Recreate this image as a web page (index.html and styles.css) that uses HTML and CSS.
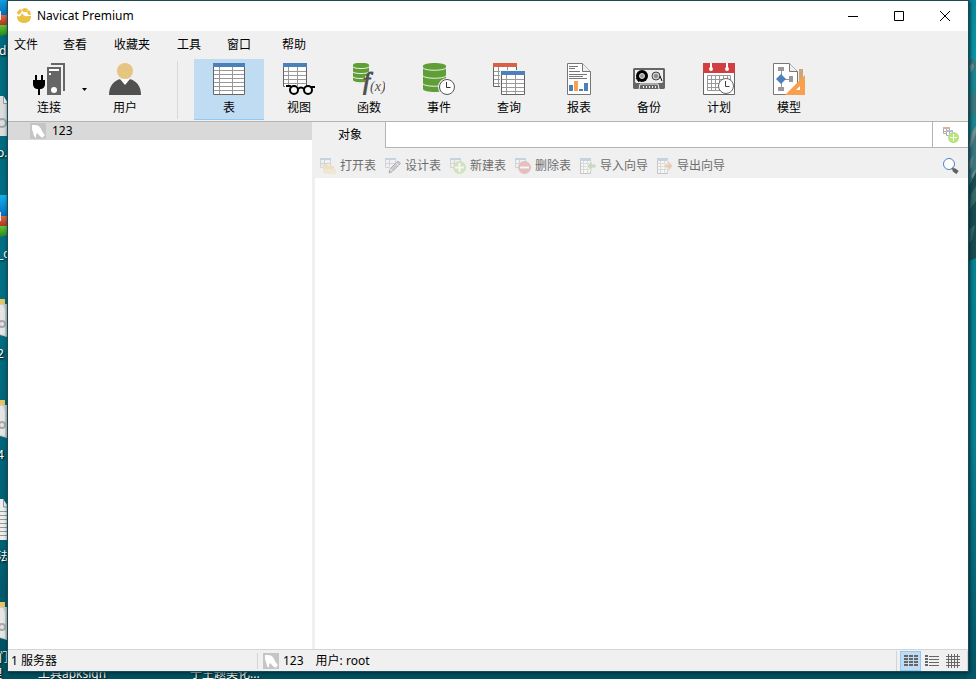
FILE: index.html
```html
<!DOCTYPE html>
<html lang="zh-CN">
<head>
<meta charset="utf-8">
<title>Navicat Premium</title>
<link rel="stylesheet" href="styles.css">
</head>
<body>
<svg class="defs" aria-hidden="true">
  <symbol id="table24" viewBox="0 0 24 24">
    <path fill="#fff" d="M0 0h24v24H0z"/>
    <path fill="none" stroke="#999" d="M5.500 4v19M14.500 4v19M1 8.500h22M1 12.500h22M1 16.500h22M1 20.500h22"/>
    <path fill="none" stroke="#666" d="M.5 3v20.500h23V3"/>
  </symbol>
  <symbol id="mini-table" viewBox="0 0 16 16">
    <path fill="#eef2f8" d="M0 0h11v10H0z"/>
    <path fill="#8fa3c4" d="M0 0h11v2H0z"/>
    <path fill="none" stroke="#a2a8b2" d="M.5 2v7.500h5M10.500 2v6M4.500 2v6M1 5.500h9"/>
  </symbol>
  <symbol id="wizard-table" viewBox="0 0 16 16">
    <path fill="#fff" d="M0 0h11v16H0z"/>
    <path fill="#8fa3c4" d="M0 0h11v3H0z"/>
    <path fill="none" stroke="#bbb" d="M3.500 3v12M7.500 3v12M1 5.500h9M1 8.500h9M1 11.500h9"/>
    <path fill="none" stroke="#888" d="M.5 3v12.500h10V3"/>
  </symbol>
  <symbol id="dolphin" viewBox="0 0 16 16">
    <path fill="#c5c5c5" d="M0 0h16v16H0z"/>
    <path fill="#fff" d="M2 2h3c4 0 6 3 7 6l2 3 1 2-2 0 1 2-3-1-3-3-1-1-1 2v3l-2-2-1-4-1-3z"/>
  </symbol>
</svg>

<div class="desktop" aria-hidden="true">
  <svg class="desk-left" width="8" height="679" viewBox="0 0 8 679">
    <defs>
      <linearGradient id="blue" x2="0" y2="1"><stop offset="0" stop-color="#16b2ee"/><stop offset="1" stop-color="#066bb8"/></linearGradient>
      <linearGradient id="red" x2="0" y2="1"><stop offset="0" stop-color="#e4683f"/><stop offset="1" stop-color="#a93a20"/></linearGradient>
      <linearGradient id="green" x2="0" y2="1"><stop offset="0" stop-color="#65c634"/><stop offset="1" stop-color="#28851c"/></linearGradient>
      <g id="app"><path fill="url(#blue)" d="M0 0h8v22H0z"/><path fill="url(#red)" d="M0 21h8v10H0z"/><path fill="url(#green)" d="M0 31h8v9l-8 2z"/><path fill="#e6e6e6" d="M0 17h1v9H0z"/></g>
      <g id="folder"><path fill="#e8c464" d="M0 0h5v5H0z"/><path fill="#ccc" d="M0 5h7v33l-7-2z"/><path fill="#e6e6e6" d="M0 6h3l2 5v25l-5-1z"/><circle cx="2" cy="25" r="3" fill="none" stroke="#aaa" stroke-width="2"/></g>
    </defs>
    <use href="#app" y="-6"/><use href="#app" y="195"/>
    <path fill="#dcdcdc" d="M0 96h3l5 7v33H0z"/><path fill="#f5f5f5" stroke="#999" d="M3.500 96v7.500H8"/><circle cx="2" cy="123" r="4" fill="none" stroke="#9aa6ad" stroke-width="2"/>
    <use href="#folder" y="299"/><use href="#folder" y="400"/><use href="#folder" y="602"/>
    <path fill="#eee" d="M0 499h3l5 7v34H0z"/><path fill="none" stroke="#999" d="M3.500 499v8H8M0 511.500h8M0 515.500h8M0 519.500h8M0 523.500h8M0 527.500h8M0 531.500h8M0 535.500h8"/>
  </svg>
  <svg class="desk-right" width="9" height="679" viewBox="0 0 9 679">
    <defs><linearGradient id="sea" x2="0" y2="1"><stop offset="0" stop-color="#078ba0"/><stop offset=".08" stop-color="#0a96a6"/><stop offset=".4" stop-color="#068494"/><stop offset=".65" stop-color="#078294"/><stop offset="1" stop-color="#045668"/></linearGradient></defs>
    <path fill="url(#sea)" d="M0 0h9v679H0z"/>
    <path fill="#3c7780" d="M0 61l5-3 4 4v126l-9 4z"/>
    <path fill="#1b8792" d="M0 73l9-5v22l-5 8-4-4zM0 118l6-6 3 7v13l-9 8z"/>
    <path fill="#719092" d="M2 66l4-3 1 4-3 6zM5 132l4-6v7l-5 14-3 3zM0 164l6-8-1 11-5 4zM4 176l5-7-2 12z"/>
    <path fill="#1a4c50" d="M0 190l9-18v86l-9 4z"/>
    <path fill="#356a67" d="M4 194l5-8v15l-7 9zM0 231l8-6-3 15-5 5z"/>
  </svg>
  <span class="caption c1">d</span><span class="caption c2">o.</span><span class="caption c3">_c</span><span class="caption c4">2</span><span class="caption c5">4</span><span class="caption c6">法</span><span class="caption c7">们</span><span class="caption c8">理</span>
  <span class="caption c9">工具apksign</span><span class="caption c10">于主题美化...</span>
</div>

<main class="window">
  <header class="titlebar">
    <svg width="16" height="16" viewBox="0 0 16 16" aria-hidden="true"><path fill="#eac143" d="M1 4l3-3 2 1-1 3-3 2zM6 1l3-1 3 1-1 3-4 0zM12 2l2 1 1 4-2 0-2-2zM1 8c3 1 4 0 5-3 1 2 3 4 6 3h3c0 5-3 7-7 7s-7-2-7-7z"/></svg>
    <h1>Navicat Premium</h1>
    <button aria-label="最小化"><svg width="12" height="12" viewBox="0 0 12 12"><path d="M1 6.500h10"/></svg></button>
    <button aria-label="最大化"><svg width="12" height="12" viewBox="0 0 12 12"><path d="M1.500 1.500h9v9h-9z"/></svg></button>
    <button aria-label="关闭"><svg width="12" height="12" viewBox="0 0 12 12"><path d="M1 1l10 10M11 1L1 11"/></svg></button>
  </header>

  <nav class="menu">
    <button>文件</button><button>查看</button><button>收藏夹</button><button>工具</button><button>窗口</button><button>帮助</button>
  </nav>

  <div class="toolbar">
    <button class="tool connect"><svg viewBox="0 0 32 32">
      <path d="M2 12h2v5h4v-5h2v5h2v4c0 3-2 5-5 5v6H5v-6c-3 0-5-2-5-5v-4h2z"/>
      <path fill="#666" d="M14 4h14v28H14zM18 0h14v28h-2V2H18z"/>
      <path fill="#fff" d="M16 6h10v2H16zM16 10h2v2h-2z"/><circle cx="21" cy="27" r="3" fill="#fff"/></svg>连接</button>
    <button class="drop" aria-label="连接选项"><svg width="5" height="3" viewBox="0 0 5 3"><path d="M0 0h5L2.500 3z"/></svg></button>
    <button class="tool"><svg viewBox="0 0 32 32">
      <path fill="#505050" d="M0 32c0-9 5-15 12-16h8c7 1 12 7 12 16z"/><path fill="#fff" d="M11 16l5 6 5-6z"/><circle cx="16" cy="8" r="8" fill="#e6c482"/></svg>用户</button>
    <span class="rule"></span>
    <button class="tool active"><svg viewBox="0 0 32 32">
      <path fill="#fff" d="M0 0h32v32H0z"/><path fill="none" stroke="#999" d="M6.500 4v27M19.500 4v27M1 7.500h30M1 11.500h30M1 15.500h30M1 19.500h30M1 23.500h30M1 27.500h30"/>
      <path fill="none" stroke="#666" d="M.5 4v27.500h31V4"/><path fill="#4c80ba" d="M0 0h32v4H0z"/></svg>表</button>
    <button class="tool"><svg viewBox="0 0 32 32">
      <use href="#table24" width="24" height="24"/><path fill="#4c80ba" d="M0 0h24v4H0z"/>
      <path fill="#f0f0f0" d="M2 23h30v9H2z"/><path fill="none" stroke="#000" stroke-width="2" d="M3 23h4l2 2M27 24h5M15 26q3-3 6 0"/>
      <circle cx="11" cy="27" r="4" fill="#f7f7f7" stroke="#000" stroke-width="2"/><circle cx="25" cy="27" r="4" fill="#f7f7f7" stroke="#000" stroke-width="2"/></svg>视图</button>
    <button class="tool"><svg viewBox="0 0 32 32">
      <path fill="#5f9f36" d="M0 2c0-3 16-3 16 0v15c0 3-16 3-16 0z"/><path fill="none" stroke="#f0f0f0" d="M0 4c2 2 14 2 16 0M0 9c2 2 14 2 16 0M0 14c2 2 14 2 16 0"/>
      <path fill="#f0f0f0" d="M12 13h7v7h-7z"/><text class="fn-f" x="10" y="27">f</text><text class="fn-x" x="17" y="28">(x)</text></svg>函数</button>
    <button class="tool"><svg viewBox="0 0 32 32">
      <path fill="#5f9f36" d="M0 3c0-4 23-4 23 0v23c0 4-23 4-23 0z"/><path fill="none" stroke="#f0f0f0" d="M0 5c3 3 20 3 23 0M0 13c3 3 20 3 23 0M0 21c3 3 20 3 23 0"/>
      <circle cx="24" cy="24" r="9" fill="#f0f0f0"/><circle cx="24" cy="24" r="7.500" fill="#fff" stroke="#555"/><path fill="none" stroke="#333" d="M23.500 19v5.500h4"/></svg>事件</button>
    <button class="tool"><svg viewBox="0 0 32 32">
      <use href="#table24" width="24" height="24"/><path fill="#d96245" d="M0 0h24v4H0z"/><path fill="#f0f0f0" d="M7 7h25v25H7z"/>
      <use href="#table24" x="8" y="8" width="24" height="24"/><path fill="#4c80ba" d="M8 8h24v4H8z"/></svg>查询</button>
    <button class="tool"><svg viewBox="0 0 32 32">
      <path fill="#fff" stroke="#777" d="M4.500.500h15l8 8v23h-23z"/><path fill="#eee" stroke="#777" d="M19.500.500v8h8"/>
      <path stroke="#777" d="M6 3.500h9M6 5.500h6M6 8.500h11M6 11.500h18M6 13.500h14M6 15.500h18"/>
      <path fill="#4c80ba" d="M6 22h4v6H6zM16 26h4v2h-4zM21 20h4v8h-4z"/><path fill="#f8a04d" d="M11 18h4v10h-4z"/></svg>报表</button>
    <button class="tool"><svg viewBox="0 0 32 32">
      <path fill="#666" d="M1 5h30l1 1v19l-1 1H1l-1-1V6z"/><path fill="#eee" d="M2 7h28v12l-1 1H3l-1-1z"/>
      <circle cx="9" cy="13" r="6"/><circle cx="9" cy="13" r="2.500" fill="#999" stroke="#ddd"/>
      <circle cx="23" cy="13" r="4" fill="#ccc" stroke="#444"/><circle cx="23" cy="13" r="2" fill="#888"/><path fill="none" stroke="#000" d="M27 13l2 5M3 15l3 4"/>
      <path fill="#666" stroke="#eee" d="M6 26l1-5h18l1 5"/><path stroke="#eee" stroke-width="2" stroke-dasharray="1 2" d="M10 24h13"/></svg>备份</button>
    <button class="tool"><svg viewBox="0 0 32 32">
      <path fill="#fff" stroke="#666" d="M.5 4v27.500h31V4z"/><path fill="#d13f40" d="M0 0h32v10H0z"/>
      <path stroke="#fff" stroke-width="2" d="M8 0v6M24 0v6"/><circle cx="8" cy="6" r="2" fill="#fff"/><circle cx="24" cy="6" r="2" fill="#fff"/>
      <path fill="none" stroke="#999" d="M4.500 12.500h23v15h-23zM8.500 12v16M12.500 12v16M16.500 12v16M20.500 12v16M24.500 12v16M4 16.500h24M4 20.500h24M4 24.500h24"/>
      <circle cx="23" cy="23" r="7.500" fill="#fff" stroke="#666"/><path fill="none" stroke="#444" d="M22.500 18v5.500h4"/></svg>计划</button>
    <button class="tool"><svg viewBox="0 0 32 32">
      <path fill="#fff" stroke="#777" d="M.5.500h16l8 8v23H.5z"/><path fill="#eee" stroke="#777" d="M16.500.500v8h8"/>
      <path stroke="#999" d="M8.500 6v20M8 16.500h10"/><path fill="#999" d="M5 4h6v4H5zM5 24h6v4H5zM16 13h4v6h-4z"/><path fill="#4c80ba" d="M8 11l5 5-5 5-5-5z"/>
      <path fill="#cda576" d="M26 6h4v12h-4z"/><path fill="#f8a04d" d="M32 12v20H12z"/><path fill="#fff" d="M27 23v4h-4z"/></svg>模型</button>
  </div>

  <div class="work">
    <aside class="tree"><a class="node" href="#c123"><svg width="16" height="16"><use href="#dolphin"/></svg>123</a></aside>
    <section class="pane">
      <div class="tabs">
        <button class="tab">对象</button><div class="strip"></div>
        <button class="add" aria-label="新建查询"><svg width="16" height="16" viewBox="0 0 16 16">
          <path fill="#fff" stroke="#aaa" d="M.5 1v5.500h6V1M3.500 1v5M1 4.500h6"/><path fill="#edaa99" d="M0 0h7v2H0z"/>
          <path fill="#fff" stroke="#aaa" d="M3.500 4v4.500h6V4M6.500 4v4"/><path fill="#a4bfdf" d="M3 3h7v2H3z"/><circle cx="10.500" cy="10.500" r="5.500" fill="#b7e47c"/><path stroke="#fff" d="M10.500 7v7M7 10.500h7"/></svg></button>
      </div>
      <div class="actions">
        <button disabled><svg viewBox="0 0 16 16"><use href="#mini-table" width="16" height="16"/><path fill="#e5c68a" d="M2 6h5l1 2h6v8H4z"/><path fill="#f1dba9" d="M4 11h12v5H4z"/></svg>打开表</button>
        <button disabled><svg viewBox="0 0 16 16"><use href="#mini-table" width="16" height="16"/><path fill="#999" stroke="#555" d="M4 15l1-4 8-8 2.500 2.500-8 8z"/><path fill="none" stroke="#eee" d="M5 11l2.500 2.500M11 5l2.500 2.500"/></svg>设计表</button>
        <button disabled><svg viewBox="0 0 16 16"><use href="#mini-table" width="16" height="16"/><circle cx="9.500" cy="9.500" r="6.500" fill="#a5cf72"/><path stroke="#fff" stroke-width="2" d="M9.500 5v9M5 9.500h9"/></svg>新建表</button>
        <button disabled><svg viewBox="0 0 16 16"><use href="#mini-table" width="16" height="16"/><circle cx="9.500" cy="9.500" r="6.500" fill="#d57579"/><path stroke="#fff" stroke-width="2" d="M5 9.500h9"/></svg>删除表</button>
        <button disabled><svg viewBox="0 0 16 16"><use href="#wizard-table" width="16" height="16"/><path fill="#91b86b" stroke="#f0f0f0" d="M7 8l5-6v4h4v4h-4v4z"/></svg>导入向导</button>
        <button disabled><svg viewBox="0 0 16 16"><use href="#wizard-table" width="16" height="16"/><path fill="#dd9865" stroke="#f0f0f0" d="M16 8l-5-6v4H7v4h4v4z"/></svg>导出向导</button>
        <button class="search" aria-label="搜索"><svg viewBox="0 0 16 16"><circle cx="6" cy="6" r="5.500" fill="#fff" stroke="#4c80c0"/><path stroke="#666" stroke-width="2" d="M9 10l2 2"/><path stroke="#606060" stroke-width="4" d="M10.500 11.500l4 3"/></svg></button>
      </div>
      <div class="content"></div>
    </section>
  </div>

  <footer class="status">
    <span class="count">1 服务器</span>
    <span class="server"><svg width="16" height="16"><use href="#dolphin"/></svg>123</span>
    <span class="user">用户: root</span>
    <div class="views">
      <button class="on" aria-label="列表"><svg width="14" height="12" viewBox="0 0 14 12"><path fill="#666" d="M0 0h4v2H0zM5 0h4v2H5zM10 0h4v2h-4zM0 3h4v2H0zM5 3h4v2H5zM10 3h4v2h-4zM0 6h4v2H0zM5 6h4v2H5zM10 6h4v2h-4zM0 9h4v2H0zM5 9h4v2H5zM10 9h4v2h-4z"/></svg></button>
      <button aria-label="详细信息"><svg width="14" height="12" viewBox="0 0 14 12"><path fill="#666" d="M0 0h3v2H0zM0 3h3v2H0zM0 6h3v2H0zM0 9h3v2H0zM4 1h10v1H4zM4 4h10v1H4zM4 7h10v1H4zM4 10h10v1H4z"/></svg></button>
      <button aria-label="ER 图表"><svg width="14" height="14" viewBox="0 0 14 14"><path stroke="#666" d="M2.500 0v14M5.500 0v14M8.500 0v14M11.500 0v14M0 2.500h14M0 5.500h14M0 8.500h14M0 11.500h14"/></svg></button>
    </div>
  </footer>
</main>
</body>
</html>
```
FILE: styles.css
```css
* { box-sizing: border-box; }

body {
  margin: 0;
  height: 100vh;
  padding: 1px 8px 8px;
  overflow: hidden;
  background: linear-gradient(#00687c, #006f84 40%, #006073 80%, #00505f);
  color: #000;
  font: 12px/16px "Noto Sans", "Noto Sans CJK SC", sans-serif;
}

button {
  margin: 0;
  padding: 0;
  border: 0;
  background: none;
  color: inherit;
  font: inherit;
}

svg { display: block; flex: none; }
.defs { position: absolute; width: 0; height: 0; }

/* Desktop behind the window */
.desktop { position: absolute; inset: 0; overflow: hidden; }
.desk-left { position: absolute; left: 0; top: 0; }
.desk-right { position: absolute; right: 0; top: 0; }
.caption {
  position: absolute;
  color: #fff;
  white-space: nowrap;
  text-shadow: 1px 1px 2px #000;
}
.c1 { left: -1px; top: 43px; }
.c2 { left: -3px; top: 145px; }
.c3 { left: -2px; top: 246px; }
.c4 { left: -3px; top: 346px; }
.c5 { left: -3px; top: 447px; }
.c6 { left: -3px; top: 549px; }
.c7 { left: -4px; top: 650px; }
.c8 { left: -10px; top: 666px; }
.c9 { left: 38px; top: 666px; }
.c10 { left: 190px; top: 666px; }

/* Application window */
.window {
  position: relative;
  display: flex;
  flex-direction: column;
  height: 100%;
  background: #f0f0f0;
  box-shadow: 0 0 0 1px #1c4953, 1px 1px 4px 1px #002a35;
}

.titlebar {
  display: flex;
  align-items: center;
  height: 30px;
  padding-left: 8px;
  background: #fff;
}
.titlebar h1 {
  flex: 1;
  margin: 0 0 0 5px;
  font-size: 12px;
  font-weight: 400;
}
.titlebar button {
  display: grid;
  place-items: center;
  width: 46px;
  height: 30px;
}
.titlebar button path { fill: none; stroke: #000; }

.menu {
  display: grid;
  grid-template-columns: 49px 51px 63px 50px 55px auto;
  align-items: center;
  height: 27px;
  padding-left: 6px;
}
.menu button { justify-self: start; }

.toolbar {
  display: flex;
  align-items: center;
  height: 64px;
  padding: 0 0 0 11px;
  border-bottom: 1px solid #b4b4b4;
}
.tool {
  display: flex;
  flex-direction: column;
  align-items: center;
  gap: 5px;
  width: 70px;
  height: 61px;
  padding-top: 4px;
  border-bottom: 1px solid transparent;
}
.tool svg { width: 32px; height: 32px; }
.connect { width: 60px; }
.active { background: #c0dcf3; border-color: #90c8f6; }
.drop { display: grid; place-items: center; width: 11px; height: 61px; }
.rule { width: 1px; height: 58px; margin: 0 16px 0 17px; background: #d8d8d8; }
.fn-f { fill: #505050; stroke: #505050; font: italic 25px "Liberation Serif", serif; }
.fn-x { fill: #505050; font: italic 14px "Liberation Serif", serif; }

.work { display: flex; flex: 1; min-height: 0; }
.tree { width: 304px; background: #fff; }
.node {
  display: flex;
  align-items: center;
  gap: 6px;
  height: 18px;
  padding-left: 22px;
  background: #d9d9d9;
  color: #000;
  text-decoration: none;
}
.pane {
  display: flex;
  flex: 1;
  flex-direction: column;
  padding-left: 3px;
}
.tabs { display: flex; height: 26px; }
.tab { width: 70px; }
.strip {
  flex: 1;
  border: solid #b4b4b4;
  border-width: 0 1px 1px;
  background: #fff;
}
.add {
  display: grid;
  place-items: center;
  width: 35px;
  border-bottom: 1px solid #b4b4b4;
  background: #fff;
}
.actions {
  display: flex;
  align-items: center;
  gap: 9px;
  height: 30px;
  padding: 5px 9px 0 5px;
}
.actions button { display: flex; align-items: center; gap: 4px; }
.actions svg { width: 16px; height: 16px; }
.actions button:disabled { color: #6d6d6d; }
.actions button:disabled svg { opacity: .4; }
.actions .search { margin-left: auto; }
.content { flex: 1; background: #fff; }

.status {
  display: flex;
  align-items: center;
  height: 22px;
  border-top: 1px solid #d4d4d4;
}
.count { width: 250px; padding-left: 3px; border-right: 1px solid #d4d4d4; }
.server { display: flex; align-items: center; gap: 4px; margin: 0 12px 0 5px; }
.views {
  display: flex;
  align-items: center;
  height: 20px;
  margin-left: auto;
  padding: 0 4px 0 3px;
  border: solid #d4d4d4;
  border-width: 0 1px;
}
.views button { display: grid; place-items: center; width: 21px; height: 20px; }
.views .on { border: 1px solid #90c8f6; background: #c0dcf3; }
```
